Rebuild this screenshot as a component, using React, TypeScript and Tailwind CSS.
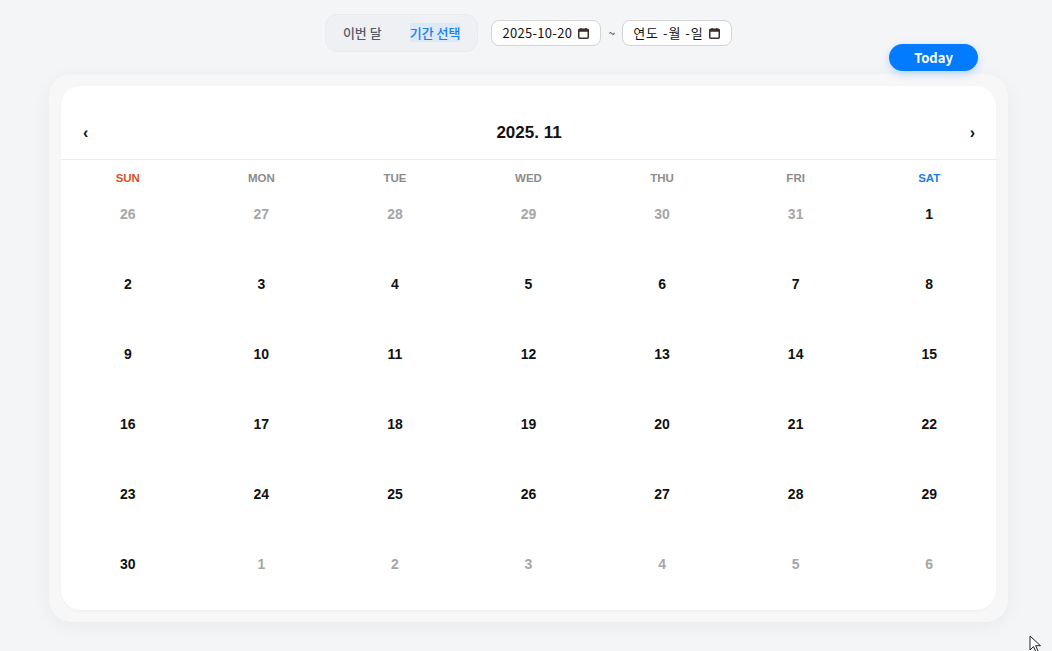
import React from "react";

const KR = { fontFamily: '"Noto Sans CJK KR", "Noto Sans", sans-serif' };
const AR = { fontFamily: '"Liberation Sans", Arial, sans-serif' };

function CalIcon() {
  return (
    <svg width="11" height="11" viewBox="0 0 11 11" className="shrink-0">
      <rect x="0.75" y="1.25" width="9.5" height="9" rx="1" fill="none" stroke="#3b2f2a" strokeWidth="1.5" />
      <rect x="0.75" y="1.25" width="9.5" height="2.5" fill="#3b2f2a" />
      <rect x="2.5" y="0" width="1.3" height="2" fill="#3b2f2a" />
      <rect x="7.2" y="0" width="1.3" height="2" fill="#3b2f2a" />
    </svg>
  );
}

const weekdays = [
  { t: "SUN", c: "text-[#d4531c]" },
  { t: "MON", c: "text-[#8c8c8c]" },
  { t: "TUE", c: "text-[#8c8c8c]" },
  { t: "WED", c: "text-[#8c8c8c]" },
  { t: "THU", c: "text-[#8c8c8c]" },
  { t: "FRI", c: "text-[#8c8c8c]" },
  { t: "SAT", c: "text-[#1a7ee6]" },
];

type Cell = { d: number; cur: boolean };
const cells: Cell[] = [
  ...[26, 27, 28, 29, 30, 31].map((d) => ({ d, cur: false })),
  ...Array.from({ length: 30 }, (_, i) => ({ d: i + 1, cur: true })),
  ...[1, 2, 3, 4, 5, 6].map((d) => ({ d, cur: false })),
];

export default function App() {
  return (
    <div className="relative min-h-[651px] w-full bg-[#f4f5f7] overflow-hidden">
      <div className="ml-[49px] w-[959px] pt-[14px]">
        <div className="flex items-center justify-center">
          <div className="flex h-[38px] items-center rounded-[12px] border border-[#e8ebf0] bg-[#eef0f4] px-[3px]" style={KR}>
            <span className="px-[14px] text-[13px] font-medium text-[#555b66]">이번 달</span>
            <span className="px-[14px] text-[13px] font-medium text-[#1a7ee6]">
              <span className="bg-[#dbe9fb]">기간 선택</span>
            </span>
          </div>
          <div className="ml-[13px] flex h-[26px] w-[110px] items-center justify-between rounded-[8px] border border-[#d4d4d4] bg-white pl-[10px] pr-[11px] text-[13px] text-[#111]" style={KR}>
            <span className="tracking-[0.3px]">2025-10-20</span>
            <CalIcon />
          </div>
          <span className="mx-[7px] text-[12px] text-[#333]" style={KR}>~</span>
          <div className="flex h-[26px] w-[110px] items-center justify-between rounded-[8px] border border-[#d4d4d4] bg-white pl-[10px] pr-[11px] text-[13px] text-[#111]" style={KR}>
            <span className="tracking-[1px]">연도 -월 -일</span>
            <CalIcon />
          </div>
        </div>

        <div className="relative mt-[22px] rounded-[22px] bg-[#f7f7f8] p-[12px] shadow-[0_4px_18px_rgba(0,0,0,0.05)]">
          <button
            className="absolute right-[30px] top-[-30px] flex h-[27px] w-[89px] items-center justify-center rounded-full bg-[#037bff] text-[13px] font-bold text-white shadow-[0_3px_8px_rgba(3,123,255,0.25)]"
            style={KR}
          >
            Today
          </button>
          <div className="rounded-[20px] bg-white shadow-[0_1px_3px_rgba(0,0,0,0.03)]" style={AR}>
            <div className="flex items-center justify-between border-b border-[#ececec] pl-[22px] pr-[21px] pb-[16px] pt-[36px]">
              <span className="text-[16px] font-bold leading-[21px] text-[#111]">‹</span>
              <span className="text-[17px] font-bold leading-[21px] text-[#111]">2025. 11</span>
              <span className="text-[16px] font-bold leading-[21px] text-[#111]">›</span>
            </div>
            <div className="grid grid-cols-7 py-[11px]">
              {weekdays.map((w) => (
                <div key={w.t} className={`text-center text-[11.5px] font-bold leading-[14px] ${w.c}`}>
                  {w.t}
                </div>
              ))}
            </div>
            <div className="mt-[4px] grid grid-cols-7 gap-y-[10px]">
              {cells.map((c, i) => (
                <div
                  key={i}
                  className={`h-[60px] pt-[7px] text-center text-[14px] font-bold leading-[14px] ${c.cur ? "text-[#111]" : "text-[#a6a6a6]"}`}
                >
                  {c.d}
                </div>
              ))}
            </div>
          </div>
        </div>
      </div>

      <svg className="absolute left-[1029px] top-[635px]" width="14" height="18" viewBox="0 0 14 18">
        <path d="M1 1 L1 15 L4.5 11.5 L7 17 L9 16 L6.7 10.7 L11.5 10.7 Z" fill="white" stroke="#222" strokeWidth="1" strokeLinejoin="round" />
      </svg>
    </div>
  );
}
